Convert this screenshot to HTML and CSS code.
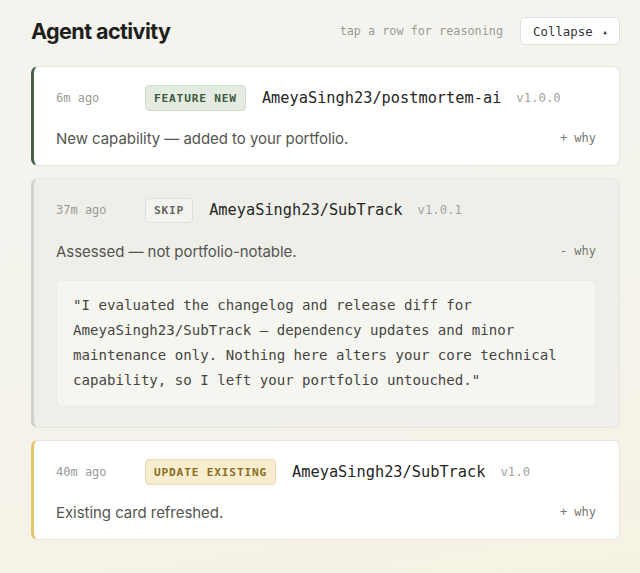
FILE: index.html
```html
<!DOCTYPE html>
<html lang="en">
<head>
<meta charset="utf-8">
<title>Agent activity</title>
<link rel="stylesheet" href="styles.css">
</head>
<body>
<main class="page">
  <header class="header">
    <h1 class="title">Agent activity</h1>
    <div class="header-right">
      <span class="hint">tap a row for reasoning</span>
      <button class="collapse">Collapse <span class="caret">▲</span></button>
    </div>
  </header>

  <section class="list">
    <article class="card card-new">
      <div class="row-top">
        <span class="time">6m ago</span>
        <span class="badge badge-new">FEATURE NEW</span>
        <span class="repo">AmeyaSingh23/postmortem-ai</span>
        <span class="ver">v1.0.0</span>
      </div>
      <div class="row-msg">
        <span class="msg">New capability — added to your portfolio.</span>
        <span class="why">+ why</span>
      </div>
    </article>

    <article class="card card-skip">
      <div class="row-top">
        <span class="time">37m ago</span>
        <span class="badge badge-skip">SKIP</span>
        <span class="repo">AmeyaSingh23/SubTrack</span>
        <span class="ver">v1.0.1</span>
      </div>
      <div class="row-msg">
        <span class="msg">Assessed — not portfolio-notable.</span>
        <span class="why">- why</span>
      </div>
      <div class="reason">"I evaluated the changelog and release diff for<br>AmeyaSingh23/SubTrack — dependency updates and minor<br>maintenance only. Nothing here alters your core technical<br>capability, so I left your portfolio untouched."</div>
    </article>

    <article class="card card-update">
      <div class="row-top">
        <span class="time">40m ago</span>
        <span class="badge badge-update">UPDATE EXISTING</span>
        <span class="repo">AmeyaSingh23/SubTrack</span>
        <span class="ver">v1.0</span>
      </div>
      <div class="row-msg">
        <span class="msg">Existing card refreshed.</span>
        <span class="why">+ why</span>
      </div>
    </article>
  </section>
</main>
</body>
</html>
```

FILE: styles.css
```css
* { box-sizing: border-box; }

html, body {
  margin: 0;
  padding: 0;
}

body {
  width: 640px;
  min-height: 573px;
  background: linear-gradient(170deg, #f4f4ef 0%, #f4f3ec 55%, #f6f2e3 100%);
  font-family: Inter, "Noto Sans", sans-serif;
  color: #222;
}

.page {
  padding: 17px 20px 0 31px;
}

.header {
  display: flex;
  align-items: center;
  justify-content: space-between;
  height: 28px;
}

.title {
  margin: 0;
  font-family: Inter, sans-serif;
  font-size: 21.6px;
  font-weight: 700;
  letter-spacing: -0.6px;
  color: #1e1e1c;
}

.header-right {
  display: flex;
  align-items: center;
  gap: 17px;
}

.hint {
  font-family: "DejaVu Sans Mono", "Liberation Mono", monospace;
  font-size: 11.8px;
  color: #9a9a94;
}

.collapse {
  height: 28px;
  width: 100px;
  padding: 0 0 0 12px;
  text-align: left;
  background: #fff;
  border: 1px solid #e2e1da;
  border-radius: 5px;
  font-family: "DejaVu Sans Mono", "Liberation Mono", monospace;
  font-size: 12.4px;
  color: #333;
}

.caret {
  font-size: 6px;
  margin-left: 3px;
  vertical-align: 2px;
}

.list {
  margin-top: 21px;
  display: flex;
  flex-direction: column;
  gap: 12px;
}

.card {
  background: #fff;
  border: 1px solid #e7e5de;
  border-left: 3px solid #4d604c;
  border-radius: 7px;
  padding: 18px 23px 15px 22px;
}

.card-skip {
  background: #efefea;
  border-color: #e6e5df;
  border-left-color: #d0d1ca;
  padding-bottom: 20px;
}

.card-update {
  border-left-color: #e3c66c;
}

.row-top {
  display: flex;
  align-items: center;
  height: 26px;
}

.time {
  width: 89px;
  flex: none;
  font-family: "DejaVu Sans Mono", "Liberation Mono", monospace;
  font-size: 12px;
  color: #9b9b95;
}

.badge {
  height: 26px;
  display: inline-flex;
  align-items: center;
  padding: 0 8px;
  border-radius: 4px;
  border: 1px solid;
  font-family: "DejaVu Sans Mono", "Liberation Mono", monospace;
  font-size: 11.2px;
  font-weight: 700;
  letter-spacing: 0.8px;
}

.badge-new {
  background: #e4ebe1;
  border-color: #cfdbcb;
  color: #3f5a3e;
}

.badge-skip {
  height: 25px;
  background: #f3f3ef;
  border-color: #dfdfd9;
  color: #666660;
}

.badge-update {
  background: #f8eecf;
  border-color: #ecdca8;
  color: #8a6c1e;
}

.repo {
  margin-left: 16px;
  font-family: "DejaVu Sans Mono", "Liberation Mono", monospace;
  font-size: 15.3px;
  font-weight: 500;
  color: #262624;
}

.ver {
  margin-left: 15px;
  font-family: "DejaVu Sans Mono", "Liberation Mono", monospace;
  font-size: 12.3px;
  color: #a3a39d;
}

.row-msg {
  margin-top: 15px;
  display: flex;
  align-items: center;
  justify-content: space-between;
  height: 24px;
}

.card-skip .row-msg {
  margin-top: 16px;
}

.msg {
  font-size: 15px;
  color: #55554f;
  letter-spacing: -0.05px;
}

.why {
  font-family: "DejaVu Sans Mono", "Liberation Mono", monospace;
  font-size: 12px;
  color: #77776f;
}

.reason {
  margin-top: 17px;
  background: #f6f6f1;
  border: 1px solid #ebeae4;
  border-radius: 6px;
  padding: 12px 16px 13px 16px;
  font-family: "DejaVu Sans Mono", "Liberation Mono", monospace;
  font-size: 14.1px;
  line-height: 25px;
  color: #45453f;
}
```
